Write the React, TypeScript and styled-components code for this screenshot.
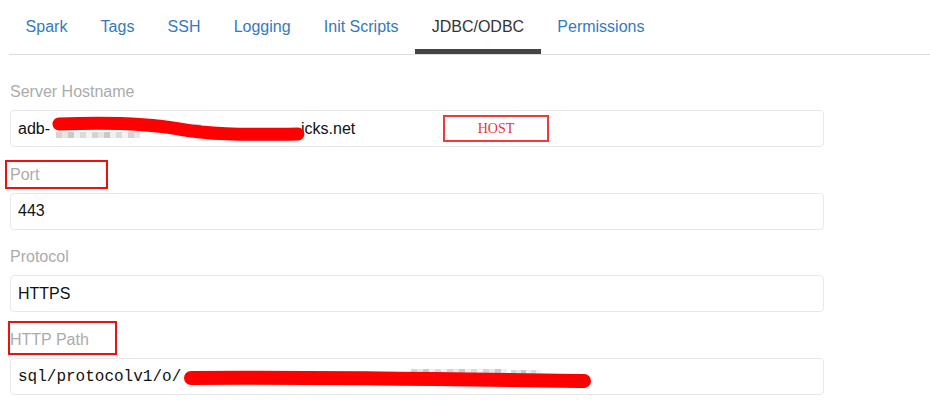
import React from "react";
import styled, { createGlobalStyle, css } from "styled-components";

const GlobalStyle = createGlobalStyle`
  html, body { margin: 0; padding: 0; background: #ffffff; }
  body {
    font-family: "Liberation Sans", Arial, sans-serif;
    color: #111;
  }
`;

const Page = styled.div`
  width: 930px;
  height: 407px;
  overflow: hidden;
  background: #fff;
`;

const TabList = styled.nav`
  display: flex;
  margin-left: 9px;
  border-bottom: 1px solid #dddddd;
`;

const Tab = styled.a<{ $active?: boolean }>`
  display: block;
  padding: 17px 16.6px 12px;
  font-size: 16px;
  line-height: 20px;
  text-decoration: none;
  cursor: pointer;
  white-space: nowrap;
  color: ${(p) => (p.$active ? "#333333" : "#3479c2")};
  border-bottom: 5px solid ${(p) => (p.$active ? "#444444" : "transparent")};
`;

const Form = styled.div`
  display: flex;
  flex-direction: column;
  width: 814px;
  padding: 27px 0 0 10px;
`;

const Field = styled.div`
  display: flex;
  flex-direction: column;
  & + & {
    margin-top: 17.7px;
  }
`;

const Label = styled.div`
  position: relative;
  font-size: 16px;
  line-height: 20px;
  color: #ababab;
  margin-bottom: 8px;
`;

const ValueBox = styled.div<{ $mono?: boolean }>`
  position: relative;
  box-sizing: border-box;
  height: 37px;
  display: flex;
  align-items: center;
  padding: 0 7px;
  border: 1px solid #e8e8e8;
  border-radius: 4px;
  font-size: 16px;
  color: #111;
  white-space: pre;
  ${(p) =>
    p.$mono &&
    css`
      font-family: "Liberation Mono", "Courier New", monospace;
    `}
`;

const Hidden = styled.span<{ $w: number }>`
  display: inline-block;
  width: ${(p) => p.$w}px;
  height: 1em;
`;

const Annotation = styled.div<{ $l: number; $t: number; $w: number; $h: number }>`
  position: absolute;
  box-sizing: border-box;
  left: ${(p) => p.$l}px;
  top: ${(p) => p.$t}px;
  width: ${(p) => p.$w}px;
  height: ${(p) => p.$h}px;
  border: 2px solid #ee0f0f;
  pointer-events: none;
`;

const HostTag = styled.div`
  position: absolute;
  box-sizing: border-box;
  left: 432px;
  top: 4px;
  width: 106px;
  height: 27px;
  border: 2px solid #f03a3a;
  display: flex;
  align-items: center;
  justify-content: center;
  font-family: "Liberation Serif", "Times New Roman", serif;
  font-size: 14px;
  color: #ea3535;
`;

const Redaction = styled.svg`
  position: absolute;
  left: 0;
  top: 0;
  width: 814px;
  height: 37px;
  pointer-events: none;
`;

const tabs = ["Spark", "Tags", "SSH", "Logging", "Init Scripts", "JDBC/ODBC", "Permissions"];

const mosaicShades = ["#d4d4d4", "#e6e6e6", "#c9c9c9", "#efefef", "#dadada", "#f3f3f3"];

function Mosaic({ x0, x1, y, h, step = 6 }: { x0: number; x1: number; y: number; h: number; step?: number }) {
  const cells = [];
  for (let x = x0, i = 0; x < x1; x += step, i++) {
    cells.push(
      <rect key={x} x={x} y={y} width={step} height={h} fill={mosaicShades[(i * 7) % mosaicShades.length]} />
    );
  }
  return <>{cells}</>;
}

export default function App() {
  return (
    <Page>
      <GlobalStyle />
      <TabList>
        {tabs.map((t) => (
          <Tab key={t} $active={t === "JDBC/ODBC"}>
            {t}
          </Tab>
        ))}
      </TabList>
      <Form>
        <Field>
          <Label>Server Hostname</Label>
          <ValueBox>
            adb-
            <Hidden $w={251} />
            icks.net
            <Redaction viewBox="0 0 814 37">
              <Mosaic x0={45} x1={128} y={21} h={6} />
              <Mosaic x0={160} x1={186} y={13} h={5} />
              <path
                d="M48,13 C 100,11 140,13 168,18 S 225,24 287,23"
                stroke="#ff0000"
                strokeWidth={13}
                strokeLinecap="round"
                fill="none"
              />
            </Redaction>
            <HostTag>HOST</HostTag>
          </ValueBox>
        </Field>
        <Field>
          <Label>
            Port
            <Annotation $l={-5} $t={-5} $w={103} $h={29} />
          </Label>
          <ValueBox>443</ValueBox>
        </Field>
        <Field>
          <Label>Protocol</Label>
          <ValueBox>HTTPS</ValueBox>
        </Field>
        <Field>
          <Label>
            HTTP Path
            <Annotation $l={-2} $t={-9} $w={109} $h={34} />
          </Label>
          <ValueBox $mono>
            sql/protocolv1/o/
            <Hidden $w={400} />
            <Redaction viewBox="0 0 814 37">
              <Mosaic x0={400} x1={494} y={10} h={7} />
              <Mosaic x0={500} x1={530} y={11} h={5} step={5} />
              <path
                d="M180,19 C 300,18 420,20 573,22"
                stroke="#ff0000"
                strokeWidth={14}
                strokeLinecap="round"
                fill="none"
              />
            </Redaction>
          </ValueBox>
        </Field>
      </Form>
    </Page>
  );
}
